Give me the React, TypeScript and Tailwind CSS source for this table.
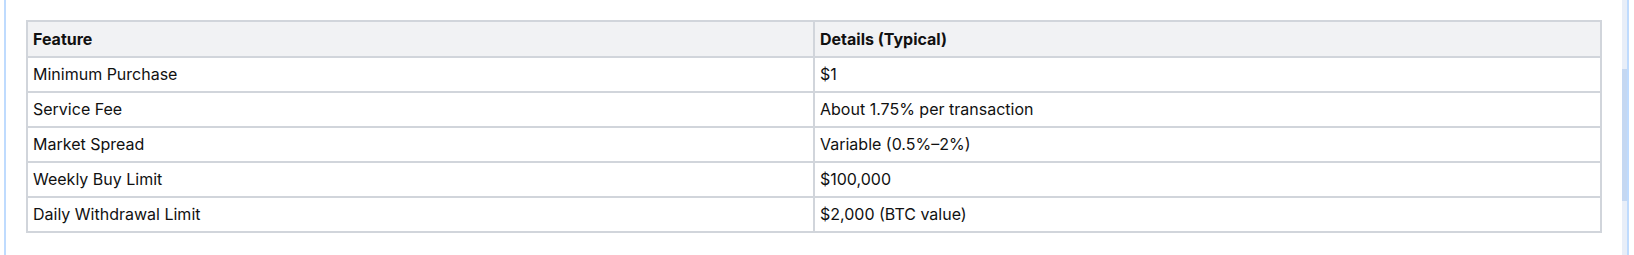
import React from 'react';

// ============================================================================
// FEATURE TABLE
// Two-column fee/limit table inside a scrollable panel
// ============================================================================

interface Row {
  feature: string;
  details: string;
}

const rows: Row[] = [
  { feature: 'Minimum Purchase', details: '$1' },
  { feature: 'Service Fee', details: 'About 1.75% per transaction' },
  { feature: 'Market Spread', details: 'Variable (0.5%–2%)' },
  { feature: 'Weekly Buy Limit', details: '$100,000' },
  { feature: 'Daily Withdrawal Limit', details: '$2,000 (BTC value)' },
];

const cell = 'border-2 border-[#d1d5db] px-[5px] py-1.5 text-left align-middle';

export default function App() {
  return (
    <div className="flex h-[255px] w-full overflow-hidden bg-white font-['Inter',sans-serif] text-[16px] leading-[21px] text-[#111111]">
      {/* Left accent */}
      <div className="w-1 shrink-0" />
      <div className="w-[2px] shrink-0 bg-[#bfdbfe]" />

      {/* Content */}
      <div className="flex-1 px-5 pt-5">
        <table className="w-full table-fixed border-collapse border-2 border-[#d1d5db]">
          <thead>
            <tr className="bg-[#f1f2f4]">
              <th className={`${cell} w-1/2 h-[36px] font-bold`}>Feature</th>
              <th className={`${cell} w-1/2 h-[36px] font-bold`}>Details (Typical)</th>
            </tr>
          </thead>
          <tbody>
            {rows.map((row, index) => (
              <tr key={index} className="h-[35px]">
                <td className={cell}>{row.feature}</td>
                <td className={cell}>{row.details}</td>
              </tr>
            ))}
          </tbody>
        </table>
      </div>

      {/* Scrollbar */}
      <div className="flex w-[5px] shrink-0 flex-col bg-[#e8eef8] pt-[69px]">
        <div className="h-[132px] bg-[#c5d8f2]" />
      </div>
      <div className="w-[2px] shrink-0 bg-[#bfdbfe]" />
      <div className="w-[5px] shrink-0" />
    </div>
  );
}
